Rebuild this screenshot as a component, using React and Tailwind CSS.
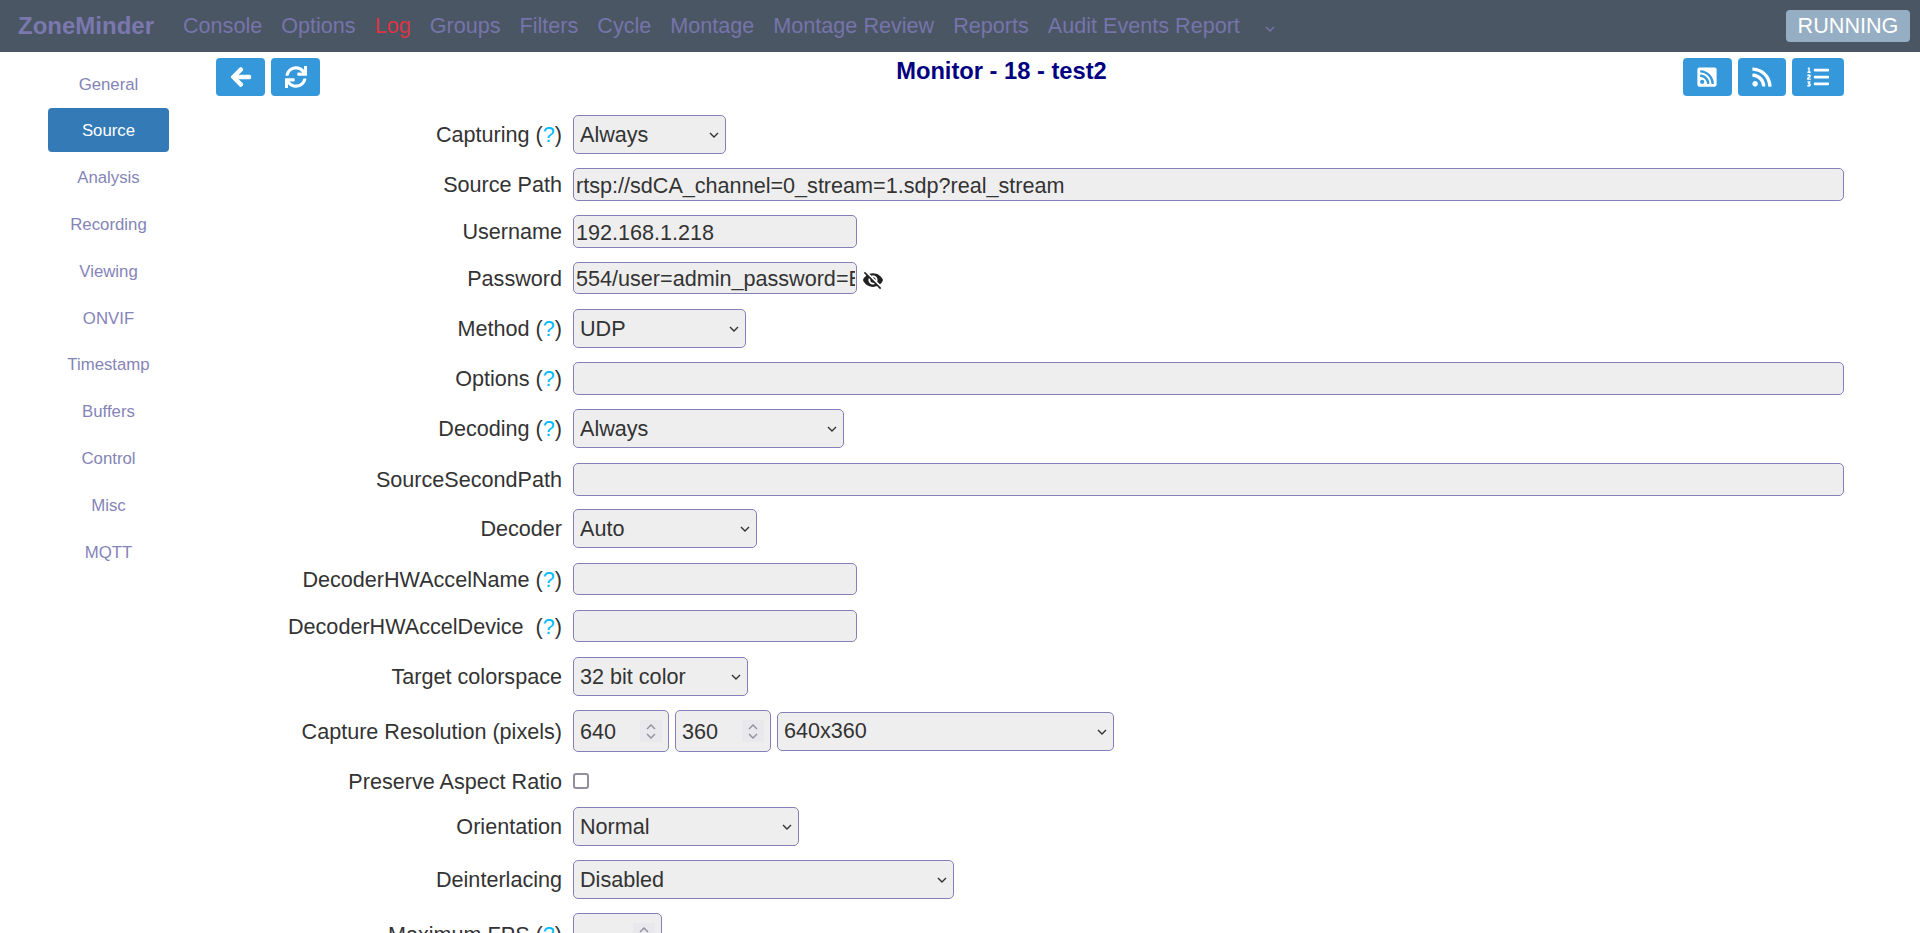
import React from 'react'
import { FaArrowLeft, FaSync, FaRssSquare, FaRss, FaListOl } from 'react-icons/fa'
import { MdVisibilityOff } from 'react-icons/md'

const navLinks = ['Console', 'Options', 'Log', 'Groups', 'Filters', 'Cycle', 'Montage', 'Montage Review', 'Reports', 'Audit Events Report']
const tabs = ['General', 'Source', 'Analysis', 'Recording', 'Viewing', 'ONVIF', 'Timestamp', 'Buffers', 'Control', 'Misc', 'MQTT']

const fieldBase = 'bg-[#eeeeee] border border-[#8380b8] rounded-[5px] text-[#333333] text-[21.6px] outline-none'

function Caret({ className }) {
  return (
    <svg viewBox="0 0 10 6" className={`w-[10px] h-[6px] ${className}`} fill="none" stroke="currentColor" strokeWidth="1.4">
      <polyline points="1,1 5,5 9,1" />
    </svg>
  )
}

function Row({ label, help, height, children }) {
  return (
    <div className={`flex items-center gap-[11px] ${height}`}>
      <label className="w-[346px] pt-[2px] text-right text-[21.6px] text-[#333333] whitespace-pre">
        {label}{help && <> (<span className="text-[#00bbff]">?</span>)</>}
      </label>
      <div className="flex-1 flex items-center gap-[6px]">{children}</div>
    </div>
  )
}

function Pick({ value, width }) {
  return (
    <div className={`relative h-[39px] ${width}`}>
      <select className={`${fieldBase} appearance-none w-full h-full pl-[6px] pt-px`} defaultValue={value}>
        <option>{value}</option>
      </select>
      <Caret className="absolute right-[7px] top-[17px] text-[#333333] pointer-events-none" />
    </div>
  )
}

function Text({ value = '', width, height = 'h-[33px]' }) {
  return <input type="text" readOnly value={value} className={`${fieldBase} ${height} ${width} pl-[2px] pr-px pt-[2px]`} />
}

function Num({ value, width }) {
  return (
    <div className={`relative h-[42px] ${width}`}>
      <input type="number" readOnly value={value} className={`${fieldBase} w-full h-full pl-[6px] pt-px [appearance:textfield]`} />
      <div className="absolute right-[7px] top-[10px] w-[22px] h-[22px] bg-[#e9e9ed] flex flex-col items-center justify-center gap-[3px] text-[#8f8f9d] pointer-events-none">
        <Caret className="rotate-180" />
        <Caret />
      </div>
    </div>
  )
}

function IconButton({ width, children }) {
  return (
    <button className={`${width} h-[38px] bg-[#3498db] rounded-[4px] flex items-center justify-center text-white text-[22px]`}>
      {children}
    </button>
  )
}

export default function App() {
  return (
    <div className="h-[933px] overflow-hidden bg-white font-['Liberation_Sans',Arial,sans-serif]">
      {/* Top nav */}
      <nav className="h-[52px] bg-[#4a5664] flex items-center pl-[18px] pr-[10px]">
        <span className="text-[24px] font-bold text-[#7a78ae] mr-[29px]">ZoneMinder</span>
        <ul className="flex items-center gap-[19px] text-[21.6px] text-[#7674aa]">
          {navLinks.map((link) => (
            <li key={link} className={link === 'Log' ? 'text-[#dc3545]' : ''}>{link}</li>
          ))}
        </ul>
        <Caret className="ml-[25px] mt-[5px] text-[#7674aa]" />
        <span className="ml-auto w-[124px] h-[32px] bg-[#95aec3] rounded-[4px] flex items-center justify-center text-white text-[21.6px]">RUNNING</span>
      </nav>

      <div className="flex">
        {/* Side tabs */}
        <aside className="w-[121px] ml-[48px] mt-[9.2px] flex flex-col gap-[2.8px] shrink-0">
          {tabs.map((tab) => (
            <div
              key={tab}
              className={`h-[44px] pt-[2px] rounded-[4px] flex items-center justify-center text-[16.8px] ${tab === 'Source' ? 'bg-[#337ab7] text-white' : 'text-[#8584b7]'}`}
            >
              {tab}
            </div>
          ))}
        </aside>

        <main className="w-[1628px] ml-[47px] pt-[6px]">
          {/* Toolbar */}
          <div className="flex justify-between">
            <div className="flex gap-[6px]">
              <IconButton width="w-[49px]"><FaArrowLeft className="stroke-[24px]" /></IconButton>
              <IconButton width="w-[49px]"><FaSync /></IconButton>
            </div>
            <h1 className="text-[23.7px] font-bold text-[#000080] leading-[26px]">Monitor - 18 - test2</h1>
            <div className="flex gap-[6px]">
              <IconButton width="w-[49px]"><FaRssSquare /></IconButton>
              <IconButton width="w-[48px]"><FaRss /></IconButton>
              <IconButton width="w-[52px]"><FaListOl /></IconButton>
            </div>
          </div>

          {/* Source form */}
          <form className="mt-[19px]">
            <Row label="Capturing" help height="h-[39px]"><Pick value="Always" width="w-[153px]" /></Row>
            <Row label="Source Path" height="h-[33px] mt-[14px]"><Text value="rtsp://sdCA_channel=0_stream=1.sdp?real_stream" width="w-[1271px]" /></Row>
            <Row label="Username" height="h-[33px] mt-[14px]"><Text value="192.168.1.218" width="w-[284px]" /></Row>
            <Row label="Password" height="h-[32px] mt-[14px]">
              <Text value="554/user=admin_password=Ef9T2kQ" width="w-[284px]" height="h-[32px]" />
              <MdVisibilityOff className="text-[22px] text-[#222222] -ml-px mt-[4px]" />
            </Row>
            <Row label="Method" help height="h-[39px] mt-[15px]"><Pick value="UDP" width="w-[173px]" /></Row>
            <Row label="Options" help height="h-[33px] mt-[14px]"><Text width="w-[1271px]" /></Row>
            <Row label="Decoding" help height="h-[39px] mt-[14px]"><Pick value="Always" width="w-[271px]" /></Row>
            <Row label="SourceSecondPath" height="h-[33px] mt-[15px]"><Text width="w-[1271px]" /></Row>
            <Row label="Decoder" height="h-[39px] mt-[13px]"><Pick value="Auto" width="w-[184px]" /></Row>
            <Row label="DecoderHWAccelName" help height="h-[32px] mt-[15px]"><Text width="w-[284px]" height="h-[32px]" /></Row>
            <Row label="DecoderHWAccelDevice " help height="h-[32px] mt-[15px]"><Text width="w-[284px]" height="h-[32px]" /></Row>
            <Row label="Target colorspace" height="h-[39px] mt-[15px]"><Pick value="32 bit color" width="w-[175px]" /></Row>
            <Row label="Capture Resolution (pixels)" height="h-[42px] mt-[14px]">
              <Num value="640" width="w-[96px]" />
              <Num value="360" width="w-[96px]" />
              <Pick value="640x360" width="w-[337px]" />
            </Row>
            <Row label="Preserve Aspect Ratio" height="h-[16px] mt-[21px]">
              <input type="checkbox" readOnly className="appearance-none w-[16px] h-[16px] bg-white border-2 border-[#8f8f9d] rounded-[3px]" />
            </Row>
            <Row label="Orientation" height="h-[39px] mt-[18px]"><Pick value="Normal" width="w-[226px]" /></Row>
            <Row label="Deinterlacing" height="h-[39px] mt-[14px]"><Pick value="Disabled" width="w-[381px]" /></Row>
            <Row label="Maximum FPS" help height="h-[42px] mt-[14px]"><Num value="" width="w-[89px]" /></Row>
          </form>
        </main>
      </div>
    </div>
  )
}
